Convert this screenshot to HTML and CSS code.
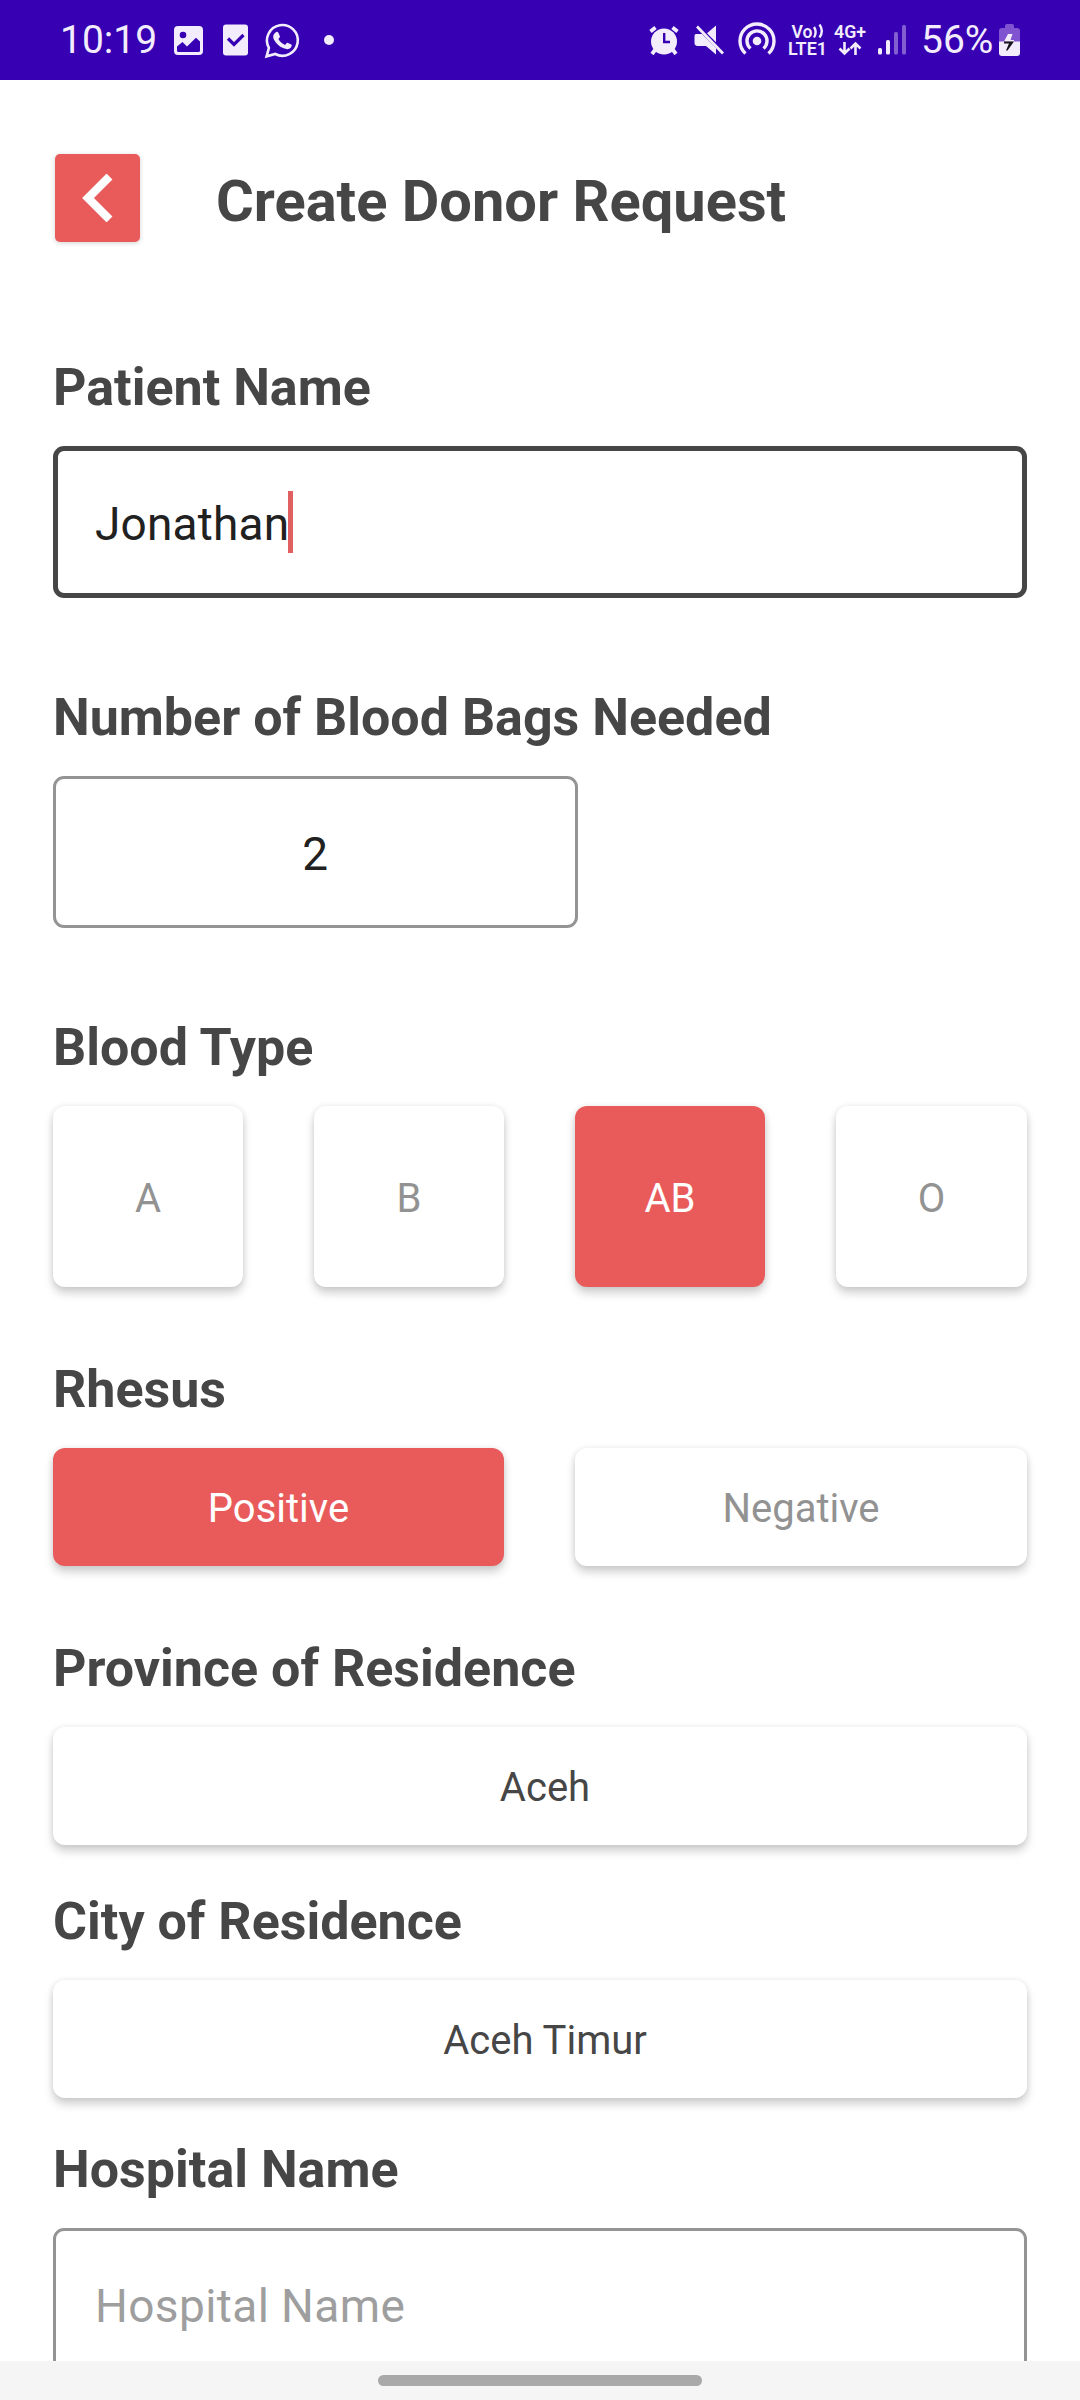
FILE: index.html
```html
<!DOCTYPE html>
<html lang="en">
<head>
<meta charset="utf-8">
<title>Create Donor Request</title>
<link rel="stylesheet" href="styles.css">
</head>
<body>
<div class="screen">
  <header class="status">
    <span class="status-text clock">10:19</span>
    <svg class="icon image" width="29" height="29" viewBox="0 0 29 29"><path fill="currentColor" fill-rule="evenodd" d="M4 0h21a4 4 0 0 1 4 4v21a4 4 0 0 1-4 4H4a4 4 0 0 1-4-4V4a4 4 0 0 1 4-4ZM3 20.500V24.500a1.500 1.500 0 0 0 1.500 1.500h20a1.500 1.500 0 0 0 1.500-1.500V15.500l-4-3.700-9 8.700-4.500-4.500ZM9 5.700a3.300 3.300 0 1 0 0 6.600a3.300 3.300 0 0 0 0-6.600Z"/></svg>
    <svg class="icon task" width="25" height="32" viewBox="0 0 25 32"><rect y=".5" width="25" height="31" rx="3" fill="currentColor"/><path d="M5 14.500l6 6L20.500 11" fill="none" stroke="#3700b3" stroke-width="3.200"/></svg>
    <svg class="icon chat" width="35" height="35" viewBox="0 0 35 35"><path d="M1.600 33.300l2.300-8.500A15.400 15.400 0 1 1 10.200 31Z" fill="none" stroke="currentColor" stroke-width="2.600"/><path fill="currentColor" d="M10.500 9.400c1-.8 2.300-.8 2.900.4l1.500 3.500c.3 1-.8 1.900-1.500 2.800 1.700 2.900 3.600 4.500 6.700 5.800.8-1 1.500-2 2.300-2.200l4 1.900c.6.600.3 2.500-.9 3.500-1.500 1.300-3.900 1.500-7.500 0-3.700-1.500-6.800-4.600-9-8.400-1.500-3-.9-5.600 1.500-7.300Z"/></svg>
    <span class="dot"></span>
    <svg class="icon alarm" width="30" height="30" viewBox="0 0 30 30"><circle cx="15" cy="16.500" r="13" fill="currentColor"/><path d="M1.500 6.500l5-4M28.500 6.500l-5-4M6 25l-3 4M24 25l3 4" stroke="currentColor" stroke-width="3.800" fill="none"/><path d="M15.200 8v9h5.800" fill="none" stroke="#3700b3" stroke-width="2.400"/></svg>
    <svg class="icon mute" width="30" height="30" viewBox="0 0 30 30"><path fill="currentColor" d="M2 9h6l14 14v6.500L12 21H3.500Q.5 20.500.5 18v-7Q.5 9 2 9ZM13 8.300L22 .500v16.800Z"/><path d="M3 1.500l26 27" stroke="currentColor" stroke-width="2.800"/></svg>
    <svg class="icon hotspot" width="38" height="33" viewBox="0 0 38 33"><circle cx="19" cy="19" r="4.300" fill="currentColor"/><path d="M12.500 26.500A10 10 0 1 1 25.500 26.500M7.500 31.500A17 17 0 1 1 30.500 31.500" fill="none" stroke="currentColor" stroke-width="3.400"/></svg>
    <svg class="icon volte" width="40" height="34" viewBox="0 0 40 34"><text class="small" x="3.500" y="14.500" textLength="21" lengthAdjust="spacingAndGlyphs">Vo</text><path d="M26 4q3.300 5 0 10.500M31.500 1.500q4.600 6.500 0 13" fill="none" stroke="currentColor" stroke-width="2.400"/><text class="small" x="0" y="32" textLength="39" lengthAdjust="spacingAndGlyphs">LTE1</text></svg>
    <svg class="icon network" width="33" height="34" viewBox="0 0 33 34"><text class="small" x="0" y="15.200" textLength="32" lengthAdjust="spacingAndGlyphs">4G+</text><path d="M10.500 19v11M5.500 25.500l5 5 5-5M21.500 32V21M16.500 25.500l5-5 5 5" fill="none" stroke="currentColor" stroke-width="2.600"/></svg>
    <svg class="icon signal" width="29" height="30" viewBox="0 0 29 30" fill="currentColor"><rect y="23" width="4" height="6.500" rx="1.500"/><rect x="8" y="15" width="4" height="14.500" rx="1.500"/><rect x="16" y="7" width="4" height="22.500" rx="1.500" opacity=".4"/><rect x="24" width="4" height="29.500" rx="1.500" opacity=".4"/></svg>
    <span class="status-text percent">56%</span>
    <svg class="icon battery" width="21" height="33" viewBox="0 0 21 33"><path fill="#8054d0" d="M6 4V2q0-2 2-2h5q2 0 2 2v2h3q3 0 3 3v11H0V7q0-3 3-3Z"/><path fill="currentColor" d="M0 17.500h21V29q0 3-3 3H3q-3 0-3-3Z"/><path fill="currentColor" d="M9 10h4.500l-2 6H15v1.500H5Z"/><path fill="#17131f" d="M5 17.500h10L8.500 26.500H7l3-7H5Z"/></svg>
  </header>
  <main class="page">
    <div class="title-row">
      <button class="back" aria-label="Back"><svg width="32" height="48" viewBox="0 0 32 48"><path d="M27.500 2.500L6 24l21.500 21.500" fill="none" stroke="#fff" stroke-width="8.300"/></svg></button>
      <h1 class="title">Create Donor Request</h1>
    </div>
    <section class="group">
      <h2 class="label">Patient Name</h2>
      <div class="field focused"><span>Jonathan</span><i class="caret"></i></div>
    </section>
    <section class="group">
      <h2 class="label">Number of Blood Bags Needed</h2>
      <div class="field count"><span>2</span></div>
    </section>
    <section class="group mid">
      <h2 class="label">Blood Type</h2>
      <div class="options blood">
        <button class="option">A</button><button class="option">B</button><button class="option selected">AB</button><button class="option">O</button>
      </div>
    </section>
    <section class="group mid">
      <h2 class="label">Rhesus</h2>
      <div class="options rhesus">
        <button class="option selected">Positive</button><button class="option">Negative</button>
      </div>
    </section>
    <section class="group province">
      <h2 class="label">Province of Residence</h2>
      <div class="options"><button class="option picker">Aceh</button></div>
    </section>
    <section class="group city">
      <h2 class="label">City of Residence</h2>
      <div class="options"><button class="option picker">Aceh Timur</button></div>
    </section>
    <section class="group">
      <h2 class="label">Hospital Name</h2>
      <div class="field placeholder"><span>Hospital Name</span></div>
    </section>
  </main>
  <footer class="nav"><span class="pill"></span></footer>
</div>
</body>
</html>
```
FILE: styles.css
```css
* { box-sizing: border-box; }
body { margin: 0; background: #fff; font-family: Roboto, sans-serif; }
h1, h2 { margin: 0; font-weight: 700; color: #464646; white-space: nowrap; }
button { border: 0; padding: 0; font: inherit; }
.screen { display: flex; flex-direction: column; width: 1080px; height: 2400px; overflow: hidden; }

.status { display: flex; flex: none; align-items: flex-start; height: 80px; padding-left: 60px; background: #3700b3; color: #f2ecfd; }
.icon { flex: none; display: block; overflow: visible; }
.status-text { flex: none; font-size: 39px; line-height: 48px; margin-top: 16px; white-space: nowrap; }
.clock { width: 114px; }
.image { margin-top: 26px; }
.task { margin: 24px 0 0 20px; }
.chat { margin: 23px 0 0 17px; }
.dot { flex: none; width: 10px; height: 10px; margin: 35px 0 0 24px; border-radius: 50%; background: currentColor; }
.alarm { margin: 25px 0 0 315px; }
.mute { margin: 25px 0 0 15px; }
.hotspot { margin: 22px 0 0 14px; }
.volte { margin: 23px 0 0 12px; }
.network { margin: 23px 0 0 6px; }
.signal { margin: 25px 0 0 11px; }
.percent { width: 78px; margin-left: 14px; }
.battery { margin: 24px 0 0; }
.small { font: 600 18.500px Roboto, sans-serif; fill: currentColor; }

.page { flex: 1; min-height: 0; overflow: hidden; padding: 74px 53px 0; }
.title-row { display: flex; align-items: flex-start; height: 203px; padding-left: 2px; }
.back { display: flex; align-items: center; justify-content: center; width: 85px; height: 88px; border-radius: 5px; background: #e95b5b; box-shadow: 0 1px 5px rgba(0,0,0,.18); }
.title { margin: 13px 0 0 76px; font-size: 57.800px; line-height: 68px; }
.group { margin-bottom: 89px; }
.mid { margin-bottom: 72px; }
.province { margin-bottom: 46px; }
.city { margin-bottom: 41px; }
.label { height: 60px; margin-bottom: 29px; font-size: 52px; line-height: 62px; }

.field { display: flex; align-items: center; height: 152px; padding: 0 39px; border: 3px solid #949494; border-radius: 11px; font-size: 46px; letter-spacing: .4px; color: #212121; }
.field span { padding-top: 4px; }
.focused { padding: 0 37px; border: 5px solid #464646; letter-spacing: .2px; }
.caret { width: 5px; height: 62px; margin-left: -1px; background: #e06062; }
.count { width: 525px; justify-content: center; }
.placeholder { color: #9e9e9e; }

.options { display: grid; gap: 71px; height: 118px; }
.blood { grid-template-columns: 190px 190px 190px 191px; height: 181px; }
.rhesus { grid-template-columns: 451px 452px; }
.option { padding-top: 3px; border-radius: 12px; background: #fff; color: #929292; font-size: 40px; box-shadow: 0 6px 10px rgba(0,0,0,.19), 0 0 6px rgba(0,0,0,.08); }
.selected { background: #e95b5b; color: #fff; }
.picker { padding-left: 10px; color: #464646; }

.nav { display: flex; flex: none; justify-content: center; height: 39px; padding-top: 14px; background: #f5f5f5; }
.pill { width: 324px; height: 11px; border-radius: 6px; background: #a9a9a9; }
```
